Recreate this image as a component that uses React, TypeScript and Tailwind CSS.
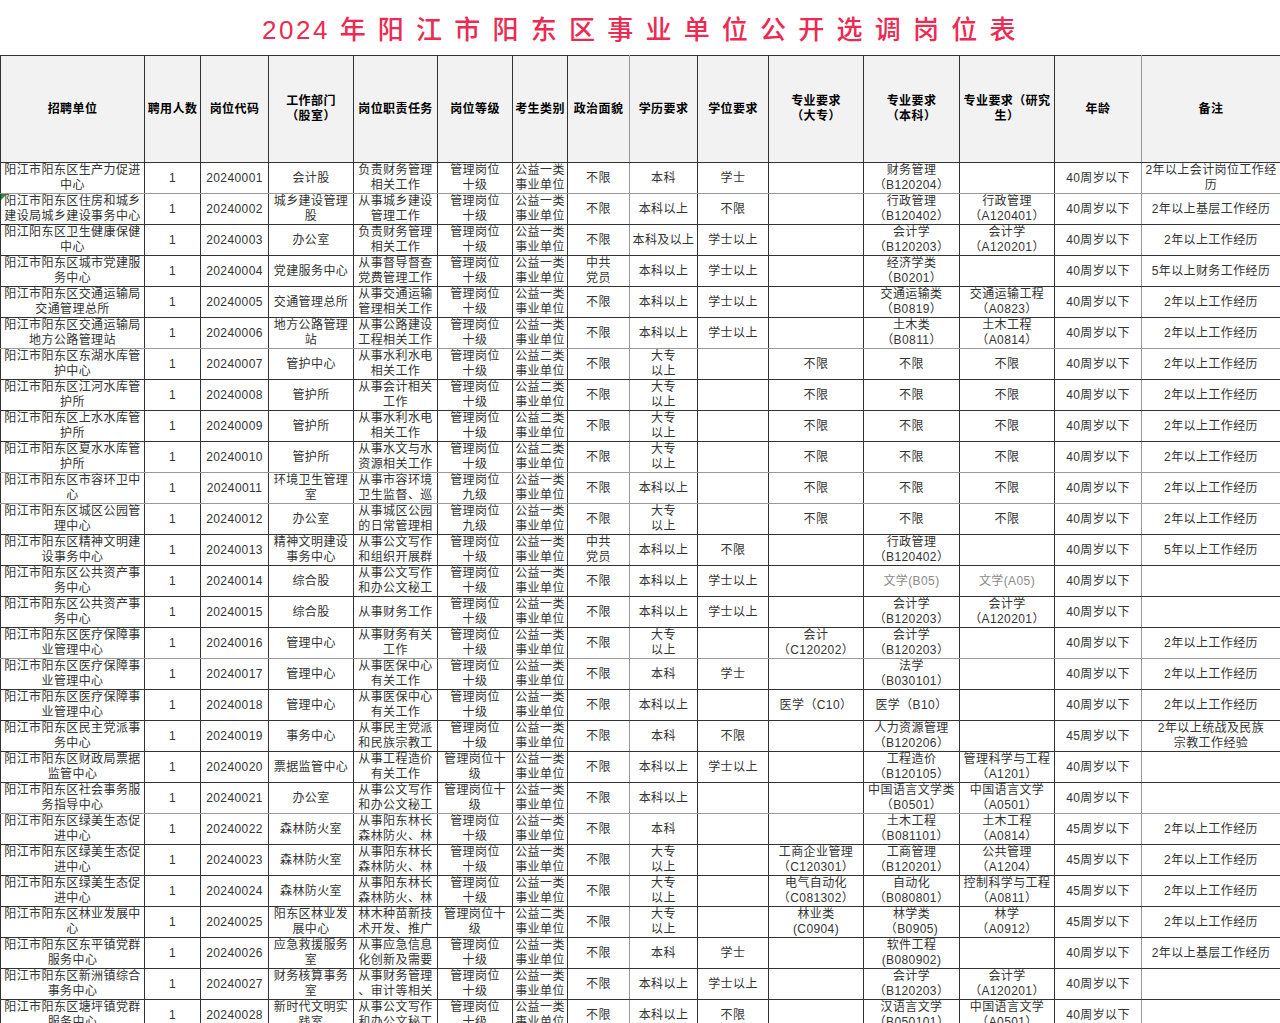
import React from "react";

type Row = string[];

// 2024 阳东区事业单位公开选调岗位表
const ROWS: Row[] = [
  ["阳江市阳东区生产力促进中心", "1", "20240001", "会计股", "负责财务管理相关工作", "管理岗位\n十级", "公益一类事业单位", "不限", "本科", "学士", "", "财务管理\n（B120204）", "", "40周岁以下", "2年以上会计岗位工作经历"],
  ["阳江市阳东区住房和城乡建设局城乡建设事务中心", "1", "20240002", "城乡建设管理股", "从事城乡建设管理工作", "管理岗位\n十级", "公益一类事业单位", "不限", "本科以上", "不限", "", "行政管理\n（B120402）", "行政管理\n（A120401）", "40周岁以下", "2年以上基层工作经历"],
  ["阳江阳东区卫生健康保健中心", "1", "20240003", "办公室", "负责财务管理相关工作", "管理岗位\n十级", "公益一类事业单位", "不限", "本科及以上", "学士以上", "", "会计学\n（B120203）", "会计学\n（A120201）", "40周岁以下", "2年以上工作经历"],
  ["阳江市阳东区城市党建服务中心", "1", "20240004", "党建服务中心", "从事督导督查党费管理工作", "管理岗位\n十级", "公益一类事业单位", "中共\n党员", "本科以上", "学士以上", "", "经济学类\n（B0201）", "", "40周岁以下", "5年以上财务工作经历"],
  ["阳江市阳东区交通运输局交通管理总所", "1", "20240005", "交通管理总所", "从事交通运输管理相关工作", "管理岗位\n十级", "公益一类事业单位", "不限", "本科以上", "学士以上", "", "交通运输类\n（B0819）", "交通运输工程\n（A0823）", "40周岁以下", "2年以上工作经历"],
  ["阳江市阳东区交通运输局地方公路管理站", "1", "20240006", "地方公路管理站", "从事公路建设工程相关工作", "管理岗位\n十级", "公益一类事业单位", "不限", "本科以上", "学士以上", "", "土木类\n（B0811）", "土木工程\n（A0814）", "40周岁以下", "2年以上工作经历"],
  ["阳江市阳东区东湖水库管护中心", "1", "20240007", "管护中心", "从事水利水电相关工作", "管理岗位\n十级", "公益二类事业单位", "不限", "大专\n以上", "", "不限", "不限", "不限", "40周岁以下", "2年以上工作经历"],
  ["阳江市阳东区江河水库管护所", "1", "20240008", "管护所", "从事会计相关工作", "管理岗位\n十级", "公益二类事业单位", "不限", "大专\n以上", "", "不限", "不限", "不限", "40周岁以下", "2年以上工作经历"],
  ["阳江市阳东区上水水库管护所", "1", "20240009", "管护所", "从事水利水电相关工作", "管理岗位\n十级", "公益二类事业单位", "不限", "大专\n以上", "", "不限", "不限", "不限", "40周岁以下", "2年以上工作经历"],
  ["阳江市阳东区夏水水库管护所", "1", "20240010", "管护所", "从事水文与水资源相关工作", "管理岗位\n十级", "公益二类事业单位", "不限", "大专\n以上", "", "不限", "不限", "不限", "40周岁以下", "2年以上工作经历"],
  ["阳江市阳东区市容环卫中心", "1", "20240011", "环境卫生管理室", "从事市容环境\n卫生监督、巡", "管理岗位\n九级", "公益一类事业单位", "不限", "本科以上", "", "不限", "不限", "不限", "40周岁以下", "2年以上工作经历"],
  ["阳江市阳东区城区公园管理中心", "1", "20240012", "办公室", "从事城区公园\n的日常管理相", "管理岗位\n九级", "公益一类事业单位", "不限", "大专\n以上", "", "不限", "不限", "不限", "40周岁以下", "2年以上工作经历"],
  ["阳江市阳东区精神文明建设事务中心", "1", "20240013", "精神文明建设事务中心", "从事公文写作\n和组织开展群", "管理岗位\n十级", "公益一类事业单位", "中共\n党员", "本科以上", "不限", "", "行政管理\n（B120402）", "", "40周岁以下", "5年以上工作经历"],
  ["阳江市阳东区公共资产事务中心", "1", "20240014", "综合股", "从事公文写作\n和办公文秘工", "管理岗位\n十级", "公益一类事业单位", "不限", "本科以上", "学士以上", "", "文学(B05)", "文学(A05)", "40周岁以下", ""],
  ["阳江市阳东区公共资产事务中心", "1", "20240015", "综合股", "从事财务工作", "管理岗位\n十级", "公益一类事业单位", "不限", "本科以上", "学士以上", "", "会计学\n（B120203）", "会计学\n（A120201）", "40周岁以下", ""],
  ["阳江市阳东区医疗保障事业管理中心", "1", "20240016", "管理中心", "从事财务有关工作", "管理岗位\n十级", "公益一类事业单位", "不限", "大专\n以上", "", "会计\n（C120202）", "会计学\n（B120203）", "", "40周岁以下", "2年以上工作经历"],
  ["阳江市阳东区医疗保障事业管理中心", "1", "20240017", "管理中心", "从事医保中心有关工作", "管理岗位\n十级", "公益一类事业单位", "不限", "本科", "学士", "", "法学\n（B030101）", "", "40周岁以下", "2年以上工作经历"],
  ["阳江市阳东区医疗保障事业管理中心", "1", "20240018", "管理中心", "从事医保中心有关工作", "管理岗位\n十级", "公益一类事业单位", "不限", "本科以上", "", "医学（C10）", "医学（B10）", "", "40周岁以下", "2年以上工作经历"],
  ["阳江市阳东区民主党派事务中心", "1", "20240019", "事务中心", "从事民主党派\n和民族宗教工", "管理岗位\n十级", "公益一类事业单位", "不限", "本科", "不限", "", "人力资源管理\n（B120206）", "", "45周岁以下", "2年以上统战及民族\n宗教工作经验"],
  ["阳江市阳东区财政局票据监管中心", "1", "20240020", "票据监管中心", "从事工程造价有关工作", "管理岗位十级", "公益一类事业单位", "不限", "本科以上", "学士以上", "", "工程造价\n（B120105）", "管理科学与工程\n（A1201）", "40周岁以下", ""],
  ["阳江市阳东区社会事务服务指导中心", "1", "20240021", "办公室", "从事公文写作\n和办公文秘工", "管理岗位十级", "公益一类事业单位", "不限", "本科以上", "", "", "中国语言文学类\n（B0501）", "中国语言文学\n（A0501）", "40周岁以下", ""],
  ["阳江市阳东区绿美生态促进中心", "1", "20240022", "森林防火室", "从事阳东林长\n森林防火、林", "管理岗位\n十级", "公益一类事业单位", "不限", "本科", "", "", "土木工程\n（B081101）", "土木工程\n（A0814）", "45周岁以下", "2年以上工作经历"],
  ["阳江市阳东区绿美生态促进中心", "1", "20240023", "森林防火室", "从事阳东林长\n森林防火、林", "管理岗位\n十级", "公益一类事业单位", "不限", "大专\n以上", "", "工商企业管理\n（C120301）", "工商管理\n（B120201）", "公共管理\n（A1204）", "45周岁以下", "2年以上工作经历"],
  ["阳江市阳东区绿美生态促进中心", "1", "20240024", "森林防火室", "从事阳东林长\n森林防火、林", "管理岗位\n十级", "公益一类事业单位", "不限", "大专\n以上", "", "电气自动化\n（C081302）", "自动化\n（B080801）", "控制科学与工程\n（A0811）", "45周岁以下", "2年以上工作经历"],
  ["阳江市阳东区林业发展中心", "1", "20240025", "阳东区林业发展中心", "林木种苗新技\n术开发、推广", "管理岗位十级", "公益二类事业单位", "不限", "大专\n以上", "", "林业类\n(C0904)", "林学类\n（B0905)", "林学\n（A0912）", "45周岁以下", "2年以上工作经历"],
  ["阳江市阳东区东平镇党群服务中心", "1", "20240026", "应急救援服务室", "从事应急信息\n化创新及需要", "管理岗位\n十级", "公益一类事业单位", "不限", "本科", "学士", "", "软件工程\n(B080902)", "", "40周岁以下", "2年以上基层工作经历"],
  ["阳江市阳东区新洲镇综合事务中心", "1", "20240027", "财务核算事务室", "从事财务管理\n、审计等相关", "管理岗位\n十级", "公益一类事业单位", "不限", "本科以上", "学士以上", "", "会计学\n（B120203）", "会计学\n（A120201）", "40周岁以下", ""],
  ["阳江市阳东区塘坪镇党群服务中心", "1", "20240028", "新时代文明实践室", "从事公文写作\n和办公文秘工", "管理岗位\n十级", "公益一类事业单位", "不限", "本科以上", "不限", "", "汉语言文学\n（B050101）", "中国语言文学\n（A0501）", "40周岁以下", ""],
];

const HEAD = [
  "招聘单位",
  "聘用人数",
  "岗位代码",
  "工作部门\n（股室）",
  "岗位职责任务",
  "岗位等级",
  "考生类别",
  "政治面貌",
  "学历要求",
  "学位要求",
  "专业要求\n（大专）",
  "专业要求\n（本科）",
  "专业要求（研究生）",
  "年龄",
  "备注",
];

// right border of these columns is drawn lighter in the sheet
const GRAY_RIGHT = new Set([7, 13]);
const GRAY_BOTTOM = new Set([0, 5, 9, 10, 15, 20]);

export default function App() {
  return (
    <div className="bg-white w-[1280px] font-['Liberation_Sans','Noto_Sans_CJK_SC',sans-serif]">
      <div className="h-[55px] pt-[5px] flex items-center justify-center text-[26px] font-medium tracking-[2.5px] text-[#ec2a52]">
        2024 年 阳 江 市 阳 东 区 事 业 单 位 公 开 选 调 岗 位 表
      </div>
      <table className="table-fixed border-collapse w-[1280px] text-[12px] leading-[15px] tracking-[0.4px]">
        <colgroup>
          <col className="w-[144px]" />
          <col className="w-[56px]" />
          <col className="w-[68px]" />
          <col className="w-[85px]" />
          <col className="w-[84px]" />
          <col className="w-[75px]" />
          <col className="w-[55px]" />
          <col className="w-[62px]" />
          <col className="w-[68px]" />
          <col className="w-[71px]" />
          <col className="w-[95px]" />
          <col className="w-[96px]" />
          <col className="w-[95px]" />
          <col className="w-[87px]" />
          <col className="w-[139px]" />
        </colgroup>
        <thead>
          <tr className="h-[107px]">
            {HEAD.map((h, i) => (
              <th
                key={i}
                className={`border border-[#333] bg-[#f2f2f2] px-[2px] align-middle text-center font-bold text-black whitespace-pre-line ${
                  GRAY_RIGHT.has(i) ? "border-r-[#999]" : ""
                }`}
              >
                {h}
              </th>
            ))}
          </tr>
        </thead>
        <tbody>
          {ROWS.map((r, ri) => (
            <tr key={ri} className="h-[30.75px]">
              {r.map((c, ci) => (
                <td
                  key={ci}
                  className={`relative border border-[#333] px-[2px] py-0 align-middle text-center whitespace-pre-line overflow-hidden ${
                    GRAY_RIGHT.has(ci) ? "border-r-[#999]" : ""
                  } ${GRAY_BOTTOM.has(ri) ? "border-b-[#999]" : ""} ${
                    c.startsWith("文学(") ? "text-[#8a8a8a]" : "text-[#333]"
                  }`}
                >
                  {ri === 1 && ci === 0 && (
                    <span className="absolute left-0 top-0 w-0 h-0 border-t-[6px] border-r-[6px] border-t-[#1e8e3e] border-r-transparent" />
                  )}
                  {c}
                </td>
              ))}
            </tr>
          ))}
        </tbody>
      </table>
    </div>
  );
}
